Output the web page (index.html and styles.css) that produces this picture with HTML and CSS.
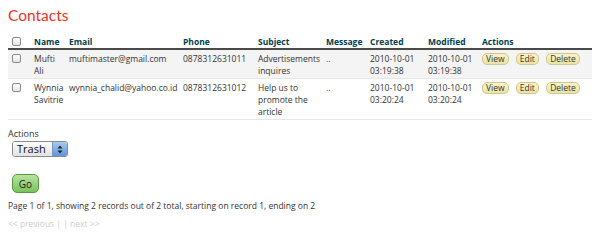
FILE: index.html
```html
<!DOCTYPE html>
<html>
<head>
    <title>Contacts</title>
    <link rel="stylesheet" href="styles.css">
</head>
<body>
    <div class="contacts index">
        <h2>Contacts</h2>
        <table class="list">
            <colgroup>
                <col style="width: 22px">
                <col style="width: 35px">
                <col style="width: 114px">
                <col style="width: 75px">
                <col style="width: 68px">
                <col style="width: 44px">
                <col style="width: 58px">
                <col style="width: 54px">
                <col>
            </colgroup>
            <tr>
                <th><span class="check"></span></th>
                <th>Name</th>
                <th>Email</th>
                <th>Phone</th>
                <th>Subject</th>
                <th>Message</th>
                <th>Created</th>
                <th>Modified</th>
                <th>Actions</th>
            </tr>
            <tr class="altrow">
                <td><span class="check"></span></td>
                <td>Mufti Ali</td>
                <td>muftimaster@gmail.com</td>
                <td>0878312631011</td>
                <td>Advertisements inquires</td>
                <td>..</td>
                <td><span class="nw">2010-10-01</span> <span class="nw">03:19:38</span></td>
                <td><span class="nw">2010-10-01</span> <span class="nw">03:19:38</span></td>
                <td class="actions">
                    <a href="#">View</a>
                    <a href="#">Edit</a>
                    <a href="#">Delete</a>
                </td>
            </tr>
            <tr>
                <td><span class="check"></span></td>
                <td>Wynnia Savitrie</td>
                <td>wynnia_chalid@yahoo.co.id</td>
                <td>0878312631012</td>
                <td>Help us to promote the article</td>
                <td>..</td>
                <td><span class="nw">2010-10-01</span> <span class="nw">03:20:24</span></td>
                <td><span class="nw">2010-10-01</span> <span class="nw">03:20:24</span></td>
                <td class="actions">
                    <a href="#">View</a>
                    <a href="#">Edit</a>
                    <a href="#">Delete</a>
                </td>
            </tr>
        </table>

        <form class="bulk">
            <label>Actions</label>
            <div class="select">
                <span class="select-value">Trash</span>
                <span class="select-arrow">
                    <svg width="6" height="9" viewBox="0 0 6 9"><path d="M3 0.5 L5.5 3.5 H0.5Z M3 8.5 L5.5 5.5 H0.5Z" fill="#222"/></svg>
                </span>
            </div>
            <div class="submit"><button type="button">Go</button></div>
        </form>

        <p class="counter">Page 1 of 1, showing 2 records out of 2 total, starting on record 1, ending on 2</p>
        <div class="paging">&lt;&lt; previous | | next &gt;&gt;</div>
    </div>
</body>
</html>
```

FILE: styles.css
```css
body {
    margin: 0;
    padding: 0 8px;
    background: #fff;
    color: #333;
    font-family: "Open Sans", sans-serif;
    font-size: 8.5px;
}

h2 {
    margin: 0;
    padding-top: 6px;
    height: 28px;
    color: #e32;
    font-family: Lato, "Liberation Sans", sans-serif;
    font-weight: normal;
    font-size: 15.5px;
    line-height: 19px;
}

table.list {
    width: 584px;
    border-collapse: collapse;
    table-layout: fixed;
    line-height: 12px;
}

table.list th {
    text-align: left;
    color: #003d4c;
    font-weight: bold;
    padding: 2px 4px 0 4px;
    border-bottom: 2px solid #4a4a4a;
    vertical-align: top;
}

table.list td {
    padding: 3px 4px 1px 4px;
    vertical-align: top;
    border-bottom: 1px solid #e6e6e6;
}

table.list tr.altrow td {
    background: #f4f4f4;
}

.nw {
    white-space: nowrap;
}

.check {
    display: inline-block;
    vertical-align: top;
    width: 7px;
    height: 7px;
    margin-top: 1px;
    border: 1px solid #8a8a8a;
    border-radius: 2px;
    background: linear-gradient(#fff, #e4e4e4);
}

td.actions {
    white-space: nowrap;
    padding-left: 11px;
}

td.actions a {
    display: inline-block;
    vertical-align: top;
    padding: 0 3px;
    margin-right: 5px;
    line-height: 10px;
    color: #333;
    text-decoration: none;
    background: linear-gradient(#f9f4c8, #ebe3a4);
    border: 1px solid #cfc690;
    border-radius: 5px;
}

form.bulk {
    margin-top: 8px;
}

form.bulk label {
    display: block;
    font-size: 9px;
    line-height: 12px;
    margin-bottom: 1px;
}

.select {
    display: flex;
    width: 54px;
    height: 14px;
    margin-left: 4px;
    border: 1px solid #8a8a8a;
    border-radius: 3px;
    overflow: hidden;
    font-size: 11px;
}

.select-value {
    flex: 1;
    padding-left: 4px;
    line-height: 14px;
    color: #111;
    background: linear-gradient(#fdfdfd, #e2e2e2);
}

.select-arrow {
    width: 14px;
    display: flex;
    align-items: center;
    justify-content: center;
    background: linear-gradient(#a9c9ef, #5f95d8);
    border-left: 1px solid #7799c0;
}

.submit {
    margin-top: 17px;
    margin-left: 4px;
}

.submit button {
    display: block;
    width: 27px;
    height: 19px;
    padding: 0;
    font-family: "Open Sans", sans-serif;
    font-size: 10px;
    color: #222;
    background: linear-gradient(#b8e3a0, #79c25b);
    border: 1px solid #5a9a45;
    border-radius: 5px;
}

p.counter {
    margin: 7px 0 0 0;
    line-height: 12px;
}

.paging {
    margin-top: 6px;
    color: #ccc;
    line-height: 12px;
}
```
